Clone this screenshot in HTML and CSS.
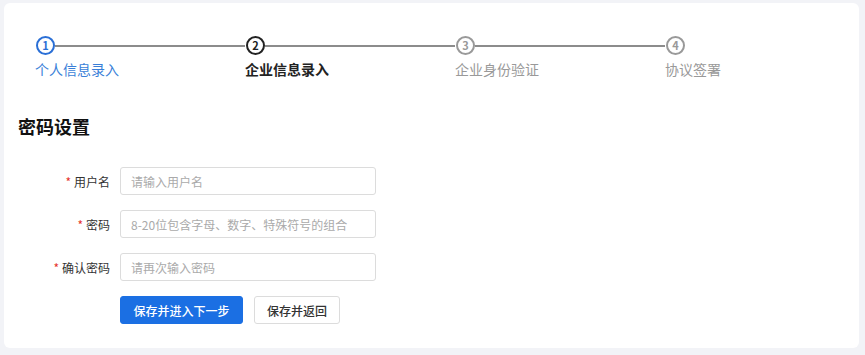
FILE: index.html
```html
<!DOCTYPE html>
<html lang="zh">
<head>
<meta charset="utf-8">
<link rel="stylesheet" href="styles.css">
</head>
<body>
<div class="card">
  <div class="steps">
    <div class="step done">
      <div class="head"><span class="dot">1</span><span class="line"></span></div>
      <div class="label">个人信息录入</div>
    </div>
    <div class="step current">
      <div class="head"><span class="dot">2</span><span class="line"></span></div>
      <div class="label">企业信息录入</div>
    </div>
    <div class="step todo">
      <div class="head"><span class="dot">3</span><span class="line"></span></div>
      <div class="label">企业身份验证</div>
    </div>
    <div class="step todo last">
      <div class="head"><span class="dot">4</span></div>
      <div class="label">协议签署</div>
    </div>
  </div>
  <h2 class="title">密码设置</h2>
  <div class="form">
    <div class="row">
      <label class="lbl"><span class="req">*</span>用户名</label>
      <input class="ipt" type="text" placeholder="请输入用户名">
    </div>
    <div class="row">
      <label class="lbl"><span class="req">*</span>密码</label>
      <input class="ipt" type="text" placeholder="8-20位包含字母、数字、特殊符号的组合">
    </div>
    <div class="row">
      <label class="lbl"><span class="req">*</span>确认密码</label>
      <input class="ipt" type="text" placeholder="请再次输入密码">
    </div>
    <div class="row actions">
      <span class="lbl"></span>
      <button class="btn primary">保存并进入下一步</button>
      <button class="btn second">保存并返回</button>
    </div>
  </div>
</div>
</body>
</html>
```
FILE: styles.css
```css
* { box-sizing: border-box; }
html, body { margin: 0; height: 100%; }
body {
  background: #f2f3f7;
  padding: 3px 6px 7px 4px;
  font-family: "Noto Sans CJK SC", "Noto Sans", sans-serif;
  color: #222;
}
.card {
  background: #fff;
  border-radius: 6px;
  height: 100%;
  padding: 33px 0 0 31px;
}
.steps { display: flex; }
.step { width: 210px; }
.step.last { width: auto; }
.head { display: flex; align-items: center; height: 19px; }
.dot {
  width: 19px; height: 19px;
  border-radius: 50%;
  border: 2px solid #999;
  display: flex; align-items: center; justify-content: center;
  font-size: 11px; font-weight: 700; line-height: 1;
  color: #999;
  flex: none;
  margin-left: 1px;
}
.line { flex: 1; height: 2px; background: #8c8c8c; }
.label { font-size: 14px; line-height: 20px; margin-top: 4px; color: #999; }
.done .dot { border-color: #2a6fd6; color: #2a6fd6; }
.done .label { color: #3a7fd8; }
.current .dot { border-color: #222; color: #222; }
.current .label { color: #222; font-weight: 700; }
.title {
  margin: 35px 0 0 -17px;
  font-size: 18px;
  line-height: 24px;
  font-weight: 700;
  color: #111;
}
.form { margin: 29px 0 0 -31px; }
.row { display: flex; align-items: center; margin-bottom: 15px; }
.lbl {
  width: 106px;
  text-align: right;
  font-size: 12px;
  color: #333;
  margin-right: 10px;
  flex: none;
}
.req { color: #e5322d; margin-right: 3px; }
.ipt {
  width: 256px;
  height: 28px;
  border: 1px solid #dcdcdc;
  border-radius: 3px;
  padding: 0 10px;
  font-family: inherit;
  font-size: 12px;
  color: #333;
  outline: none;
}
.ipt::placeholder { color: #aaa; }
.btn {
  height: 28px;
  padding: 0;
  font-family: inherit;
  font-size: 12px;
  font-weight: 500;
  white-space: nowrap;
  border: 1px solid #dcdcdc;
  border-radius: 3px;
  background: #fff;
  color: #333;
  margin-right: 11px;
}
.btn.primary {
  width: 123px;
  background: #1b6fe3;
  border-color: #1b6fe3;
  color: #fff;
}
.btn.second { width: 86px; }
```
